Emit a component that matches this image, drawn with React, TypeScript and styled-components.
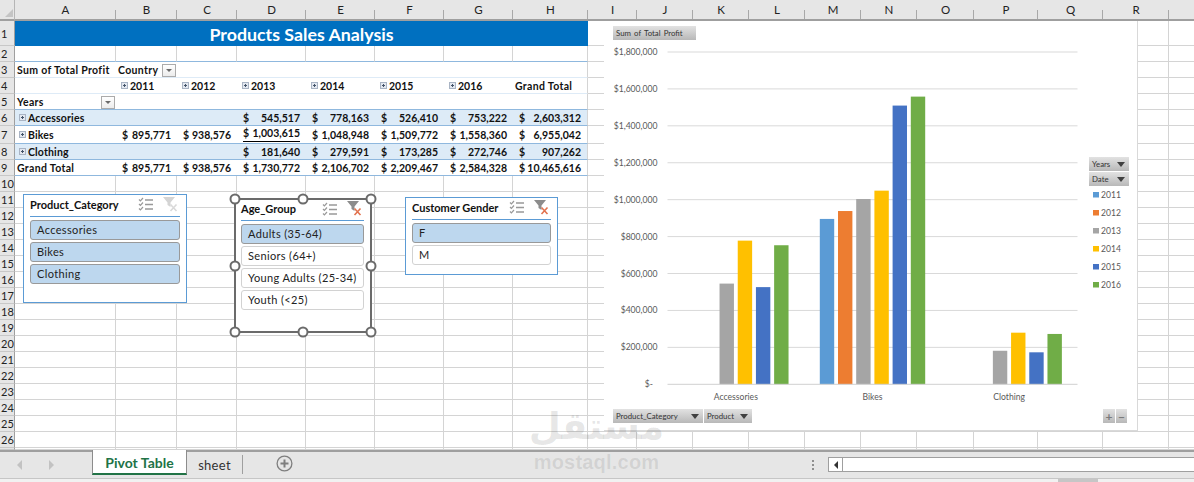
import React from "react";
import styled, { createGlobalStyle } from "styled-components";

const COLUMNS = "A B C D E F G H I J K L M N O P Q R S".split(" ");
const COLUMN_WIDTHS = [101, 61, 60, 69, 69, 69, 69, 75, 49, 56, 56, 56, 56, 56, 57, 64, 65, 66, 65];
const ROW_HEIGHTS = [25, 16, 16, 16, 16, 16, 18, 16, 16, ...Array(17).fill(16), 2];

type Tone = "none" | "band";
type Rule = "none" | "light" | "strong";

interface PivotCellData {
  text?: string;
  money?: [string, string];
  expand?: boolean;
  filter?: boolean;
  indent?: boolean;
  underlined?: boolean;
}

interface PivotRow {
  row: number;
  tone: Tone;
  rule: Rule;
  cells: PivotCellData[];
}

const m = (value: string): PivotCellData => ({ money: ["$", value] });
const blank: PivotCellData = {};

const PIVOT_ROWS: PivotRow[] = [
  {
    row: 3,
    tone: "none",
    rule: "light",
    cells: [{ text: "Sum of Total Profit" }, { text: "Country", filter: true }, blank, blank, blank, blank, blank, blank],
  },
  {
    row: 4,
    tone: "none",
    rule: "light",
    cells: [
      blank,
      { text: "2011", expand: true },
      { text: "2012", expand: true },
      { text: "2013", expand: true },
      { text: "2014", expand: true },
      { text: "2015", expand: true },
      { text: "2016", expand: true },
      { text: "Grand Total" },
    ],
  },
  {
    row: 5,
    tone: "none",
    rule: "strong",
    cells: [{ text: "Years", filter: true }, blank, blank, blank, blank, blank, blank, blank],
  },
  {
    row: 6,
    tone: "band",
    rule: "strong",
    cells: [
      { text: "Accessories", expand: true, indent: true },
      blank,
      blank,
      m("545,517"),
      m("778,163"),
      m("526,410"),
      m("753,222"),
      m("2,603,312"),
    ],
  },
  {
    row: 7,
    tone: "none",
    rule: "strong",
    cells: [
      { text: "Bikes", expand: true, indent: true },
      m("895,771"),
      m("938,576"),
      { money: ["$", "1,003,615"], underlined: true },
      m("1,048,948"),
      m("1,509,772"),
      m("1,558,360"),
      m("6,955,042"),
    ],
  },
  {
    row: 8,
    tone: "band",
    rule: "strong",
    cells: [
      { text: "Clothing", expand: true, indent: true },
      blank,
      blank,
      m("181,640"),
      m("279,591"),
      m("173,285"),
      m("272,746"),
      m("907,262"),
    ],
  },
  {
    row: 9,
    tone: "none",
    rule: "strong",
    cells: [
      { text: "Grand Total" },
      m("895,771"),
      m("938,576"),
      m("1,730,772"),
      m("2,106,702"),
      m("2,209,467"),
      m("2,584,328"),
      m("10,465,616"),
    ],
  },
];

const SERIES = [
  { year: "2011", color: "#5B9BD5" },
  { year: "2012", color: "#ED7D31" },
  { year: "2013", color: "#A5A5A5" },
  { year: "2014", color: "#FFC000" },
  { year: "2015", color: "#4472C4" },
  { year: "2016", color: "#70AD47" },
];

const CATEGORIES = [
  { name: "Accessories", values: [0, 0, 545517, 778163, 526410, 753222] },
  { name: "Bikes", values: [895771, 938576, 1003615, 1048948, 1509772, 1558360] },
  { name: "Clothing", values: [0, 0, 181640, 279591, 173285, 272746] },
];

const AXIS_TICKS = ["$1,800,000", "$1,600,000", "$1,400,000", "$1,200,000", "$1,000,000", "$800,000", "$600,000", "$400,000", "$200,000"];

const GlobalStyle = createGlobalStyle`
  html, body {
    margin: 0;
    padding: 0;
    background: #fff;
  }
  body {
    font-family: "Lato", "Liberation Sans", sans-serif;
  }
`;

const Page = styled.div`
  position: relative;
  width: 1194px;
  height: 482px;
  overflow: hidden;
  display: flex;
  flex-direction: column;
  background: #fff;
`;

const Sheet = styled.div`
  position: relative;
  height: 450px;
  flex: none;
  overflow: hidden;
`;

const Grid = styled.div`
  display: grid;
  grid-template-columns: 15px ${COLUMN_WIDTHS.map((w) => `${w}px`).join(" ")};
  grid-template-rows: 21px ${ROW_HEIGHTS.map((h) => `${h}px`).join(" ")};
`;

const Corner = styled.div`
  position: relative;
  background: #e6e6e6;
  border-right: 1px solid #b5b5b5;
  border-bottom: 2px solid #9f9f9f;
  box-sizing: border-box;

  &::after {
    content: "";
    position: absolute;
    right: 1px;
    bottom: 2px;
    border-left: 8px solid transparent;
    border-bottom: 8px solid #c4c4c4;
  }
`;

const ColumnHead = styled.div`
  position: relative;
  box-sizing: border-box;
  background: #e6e6e6;
  border-bottom: 2px solid #9f9f9f;
  display: flex;
  align-items: center;
  justify-content: center;
  font-size: 11.5px;
  color: #222;

  &::after {
    content: "";
    position: absolute;
    right: 0;
    bottom: 0;
    height: 9px;
    width: 1px;
    background: #a8a8a8;
  }
`;

const RowHead = styled.div`
  box-sizing: border-box;
  background: #e6e6e6;
  border-right: 1px solid #9f9f9f;
  border-bottom: 1px solid #c8c8c8;
  overflow: hidden;
  display: flex;
  align-items: center;
  padding-left: 1px;
  font-size: 11px;
  line-height: 1;
  color: #222;
`;

const BlankCell = styled.div<{ $rule?: string }>`
  box-sizing: border-box;
  border-right: 1px solid #d4d4d4;
  border-bottom: 1px solid ${(p) => p.$rule ?? "#d4d4d4"};
`;

const TitleCell = styled.div`
  grid-column: span 8;
  background: #0070c0;
  color: #fff;
  display: flex;
  align-items: center;
  justify-content: center;
  font-size: 17.8px;
  font-weight: 700;
`;

const RULES: Record<Rule, string> = { none: "transparent", light: "#deebf7", strong: "#8fb8de" };

const PivotCell = styled.div<{ $tone: Tone; $rule: Rule; $edge: boolean; $indent: boolean; $spacing: number }>`
  position: relative;
  box-sizing: border-box;
  display: flex;
  align-items: center;
  gap: 2px;
  padding: 0 6px 0 ${(p) => (p.$indent ? 4 : 2)}px;
  background: ${(p) => (p.$tone === "band" ? "#ddebf7" : "#fff")};
  border-bottom: 1px solid ${(p) => RULES[p.$rule]};
  border-right: ${(p) => (p.$edge ? "1px solid #d4d4d4" : "none")};
  font-size: 10.5px;
  font-weight: 700;
  letter-spacing: ${(p) => p.$spacing}px;
  color: #111;
  white-space: nowrap;
`;

const MoneyValue = styled.div<{ $underlined: boolean }>`
  flex: 1;
  display: flex;
  justify-content: space-between;
  margin-left: 4px;
  ${(p) =>
    p.$underlined
      ? `border-bottom: 1px solid #000; padding-bottom: 2px; margin-bottom: 1px;`
      : ""}
`;

const ExpandBox = styled.span`
  position: relative;
  flex: none;
  width: 7px;
  height: 7px;
  box-sizing: border-box;
  background: #e3e8f0;
  border: 1px solid #a9b4c4;

  &::before,
  &::after {
    content: "";
    position: absolute;
    background: #44546a;
  }
  &::before {
    left: 1px;
    top: 2px;
    width: 3px;
    height: 1px;
  }
  &::after {
    left: 2px;
    top: 1px;
    width: 1px;
    height: 3px;
  }
`;

const YearIndent = styled.span`
  width: 1px;
  flex: none;
`;

const FilterButton = styled.span`
  position: absolute;
  top: 2px;
  right: 1px;
  width: 14px;
  height: 13px;
  box-sizing: border-box;
  background: linear-gradient(#fff, #ececec);
  border: 1px solid #ababab;

  &::after {
    content: "";
    position: absolute;
    left: 3px;
    top: 4px;
    border-left: 3px solid transparent;
    border-right: 3px solid transparent;
    border-top: 3px solid #6a6a6a;
  }
`;

const SlicerBox = styled.div<{ $left: number; $top: number; $width: number; $height: number; $selected?: boolean }>`
  position: absolute;
  left: ${(p) => p.$left}px;
  top: ${(p) => p.$top}px;
  width: ${(p) => p.$width}px;
  height: ${(p) => p.$height}px;
  box-sizing: border-box;
  background: #fff;
  border: ${(p) => (p.$selected ? "2px solid #6b6b6b" : "1px solid #5b9bd5")};
  padding: 0 6px 0 ${(p) => (p.$selected ? 5 : 6)}px;
  display: flex;
  flex-direction: column;
`;

const SlicerHeader = styled.div<{ $selected?: boolean }>`
  height: ${(p) => (p.$selected ? 21 : 22)}px;
  flex: none;
  box-sizing: border-box;
  padding-bottom: 3px;
  display: flex;
  align-items: center;
  justify-content: space-between;
  border-bottom: 1px solid #5b9bd5;
  margin-bottom: 3px;
  font-size: 11px;
  font-weight: 700;
  color: #111;
`;

const SlicerTools = styled.div`
  display: flex;
  align-items: center;
  gap: 10px;
  margin-right: 2px;
`;

const SlicerItems = styled.div`
  display: flex;
  flex-direction: column;
  gap: 2.5px;
`;

const SlicerItem = styled.div<{ $on: boolean }>`
  height: 19.5px;
  box-sizing: border-box;
  display: flex;
  align-items: center;
  padding-left: 6px;
  border-radius: 3px;
  border: 1px solid ${(p) => (p.$on ? "#999" : "#d2d2d2")};
  background: ${(p) => (p.$on ? "#bdd7ee" : "#fff")};
  font-size: 11px;
  letter-spacing: 0.35px;
  color: #222;
  white-space: nowrap;
`;

const Handle = styled.span<{ $h: number; $v: number }>`
  position: absolute;
  left: calc(${(p) => p.$h}% + ${(p) => (p.$h - 50) / 50}px);
  top: calc(${(p) => p.$v}% + ${(p) => (p.$v - 50) / 50}px);
  width: 11px;
  height: 11px;
  box-sizing: border-box;
  border-radius: 50%;
  background: #fff;
  border: 2px solid #6b6b6b;
  transform: translate(-50%, -50%);
`;

const ChartFrame = styled.div`
  position: absolute;
  left: 604px;
  top: 21px;
  width: 534px;
  height: 410px;
  box-sizing: border-box;
  background: #fff;
  border-right: 1px solid #d9d9d9;
  border-bottom: 1px solid #d9d9d9;
`;

const ChartSvg = styled.svg`
  display: block;
  font-family: "Lato", "Liberation Sans", sans-serif;
`;

const FieldButton = styled.div<{ $x: number; $y: number; $w: number }>`
  position: absolute;
  left: ${(p) => p.$x - 604}px;
  top: ${(p) => p.$y - 21}px;
  width: ${(p) => p.$w}px;
  height: 14px;
  box-sizing: border-box;
  padding: 0 4px 0 3px;
  display: flex;
  align-items: center;
  justify-content: space-between;
  background: linear-gradient(#e2e2e2, #b8b8b8);
  font-size: 7.8px;
  word-spacing: 1.2px;
  color: #333;
  white-space: nowrap;
`;

const FieldArrow = styled.span`
  flex: none;
  border-left: 4px solid transparent;
  border-right: 4px solid transparent;
  border-top: 5px solid #404040;
`;

const ZoomButton = styled(FieldButton)`
  justify-content: center;
  padding: 0;
  font-size: 12px;
  font-weight: 700;
  color: #7a7a7a;
`;

const TabBar = styled.div`
  height: 28px;
  flex: none;
  box-sizing: border-box;
  background: #e6e6e6;
  border-top: 2px solid #9f9f9f;
  display: flex;
  align-items: stretch;
`;

const NavArrows = styled.div`
  width: 92px;
  box-sizing: border-box;
  padding: 0 38px 0 17px;
  display: flex;
  align-items: center;
  justify-content: space-between;
`;

const NavArrow = styled.span<{ $dir: "left" | "right" }>`
  border-top: 5px solid transparent;
  border-bottom: 5px solid transparent;
  ${(p) => (p.$dir === "left" ? "border-right" : "border-left")}: 5px solid #c2c2c2;
`;

const ActiveTab = styled.div`
  width: 95px;
  height: 25px;
  margin-top: -2px;
  padding-top: 1px;
  box-sizing: border-box;
  background: #fff;
  border-left: 1px solid #8c8c8c;
  border-right: 1px solid #8c8c8c;
  border-bottom: 2px solid #217346;
  display: flex;
  align-items: center;
  justify-content: center;
  font-size: 14px;
  font-weight: 700;
  color: #217346;
`;

const SheetTab = styled.div`
  width: 56px;
  height: 19px;
  margin-top: 3px;
  box-sizing: border-box;
  border-right: 1px solid #9f9f9f;
  display: flex;
  align-items: center;
  justify-content: center;
  font-size: 13px;
  letter-spacing: 0.3px;
  color: #333;
`;

const AddSheet = styled.div`
  margin-left: 33px;
  display: flex;
  align-items: center;
  padding-bottom: 3px;
`;

const ScrollArea = styled.div`
  margin-left: auto;
  width: 382px;
  display: flex;
  align-items: flex-start;
`;

const GripDots = styled.div`
  width: 2px;
  height: 10px;
  margin: 8px 14px 0 0;
  background: repeating-linear-gradient(#8f8f8f 0 2px, transparent 2px 4px);
`;

const ScrollTrack = styled.div`
  flex: 1;
  height: 15px;
  margin-top: 5px;
  box-sizing: border-box;
  background: #fff;
  border-top: 1px solid #9f9f9f;
  border-bottom: 1px solid #9f9f9f;
  border-left: 1px solid #9f9f9f;
  display: flex;
`;

const ScrollStep = styled.div`
  width: 14px;
  box-sizing: border-box;
  border-right: 1px solid #9f9f9f;
  display: flex;
  align-items: center;
  justify-content: center;

  &::before {
    content: "";
    border-top: 4px solid transparent;
    border-bottom: 4px solid transparent;
    border-right: 4px solid #333;
  }
`;

const StatusStrip = styled.div`
  flex: 1;
  box-sizing: border-box;
  background: #f1f1f1;
  border-top: 1px solid #c6c6c6;
`;

const StatusThumb = styled.div`
  width: 40px;
  height: 100%;
  margin-left: 1058px;
  background: #c6c6c6;
`;

const Watermark = styled.div`
  position: absolute;
  left: 534px;
  top: 402px;
  width: 125px;
  display: flex;
  flex-direction: column;
  align-items: center;
  color: rgba(70, 70, 70, 0.13);
  pointer-events: none;
`;

const WatermarkArabic = styled.div`
  font-family: "DejaVu Sans", sans-serif;
  font-weight: 700;
  font-size: 37px;
  line-height: 50px;
`;

const WatermarkLatin = styled.div`
  font-family: "Liberation Sans", sans-serif;
  font-weight: 700;
  font-size: 20px;
  line-height: 20px;
  letter-spacing: 0.2px;
`;

const ChecklistIcon = () => (
  <svg width="15" height="14" viewBox="0 0 15 14" fill="none" stroke="#999">
    <path d="M1 2.5l1.4 1.4L5 1M1 7l1.4 1.4L5 5.5M1 11.5l1.4 1.4L5 10" strokeWidth="1.2" />
    <path d="M7 3h8M7 7.5h8M7 12h8" strokeWidth="1.3" />
  </svg>
);

const ClearFilterIcon = ({ active }: { active: boolean }) => (
  <svg width="15" height="15" viewBox="0 0 15 15" fill="none">
    <path d="M0 0h12L7.5 5.5V10L4.5 8V5.5z" fill={active ? "#8c8c8c" : "#d4d4d4"} />
    <path d="M7.5 7.5l6 6.5M13.5 7.5l-6 6.5" stroke={active ? "#e2734f" : "#d9d9d9"} strokeWidth="1.6" />
  </svg>
);

const PlusCircleIcon = () => (
  <svg width="17" height="17" viewBox="0 0 17 17" fill="none">
    <circle cx="8.5" cy="8.5" r="7.4" stroke="#7f7f7f" strokeWidth="1.3" />
    <path d="M8.5 4.5v8M4.5 8.5h8" stroke="#7f7f7f" strokeWidth="2" />
  </svg>
);

const Slicer = ({
  title,
  items,
  selected,
  cleared,
  left,
  top,
  width,
  height,
  handles,
}: {
  title: string;
  items: string[];
  selected: string[];
  cleared: boolean;
  left: number;
  top: number;
  width: number;
  height: number;
  handles?: boolean;
}) => (
  <SlicerBox $left={left} $top={top} $width={width} $height={height} $selected={handles}>
    <SlicerHeader $selected={handles}>
      {title}
      <SlicerTools>
        <ChecklistIcon />
        <ClearFilterIcon active={cleared} />
      </SlicerTools>
    </SlicerHeader>
    <SlicerItems>
      {items.map((item) => (
        <SlicerItem key={item} $on={selected.includes(item)}>
          {item}
        </SlicerItem>
      ))}
    </SlicerItems>
    {handles &&
      [
        [0, 0],
        [50, 0],
        [100, 0],
        [0, 50],
        [100, 50],
        [0, 100],
        [50, 100],
        [100, 100],
      ].map(([h, v]) => <Handle key={`${h}-${v}`} $h={h} $v={v} />)}
  </SlicerBox>
);

const AXIS_ZERO = 384.3;
const PX_PER_DOLLAR = 332.3 / 1800000;
const PLOT_LEFT = 667.5;
const PLOT_RIGHT = 1077.5;
const BAR_WIDTH = 14.4;
const BAR_STEP = 18.2;

const SalesChart = () => {
  const categoryWidth = (PLOT_RIGHT - PLOT_LEFT) / CATEGORIES.length;
  return (
    <ChartFrame>
      <ChartSvg width="533" height="409" viewBox="604 21 533 409">
        {AXIS_TICKS.map((label, i) => {
          const y = 52 + i * 36.92;
          return (
            <g key={label}>
              <line x1={PLOT_LEFT} x2={PLOT_RIGHT} y1={y} y2={y} stroke="#d9d9d9" />
              <text x="657.5" y={y + 3} textAnchor="end" fontSize="8.6" fill="#595959">
                {label}
              </text>
            </g>
          );
        })}
        <text x="653" y={AXIS_ZERO + 3} textAnchor="end" fontSize="8.6" fill="#595959">
          $-
        </text>
        {CATEGORIES.map((category, c) => {
          const center = PLOT_LEFT + categoryWidth * (c + 0.5);
          const start = center - (BAR_STEP * 6 - (BAR_STEP - BAR_WIDTH)) / 2;
          return (
            <g key={category.name}>
              {category.values.map((value, s) =>
                value > 0 ? (
                  <rect
                    key={SERIES[s].year}
                    x={start + s * BAR_STEP}
                    y={AXIS_ZERO - value * PX_PER_DOLLAR}
                    width={BAR_WIDTH}
                    height={value * PX_PER_DOLLAR}
                    fill={SERIES[s].color}
                  />
                ) : null
              )}
              <text x={center} y="400" textAnchor="middle" fontSize="8.6" fill="#595959">
                {category.name}
              </text>
            </g>
          );
        })}
        <line x1={PLOT_LEFT} x2={PLOT_RIGHT} y1={AXIS_ZERO} y2={AXIS_ZERO} stroke="#d0d0d0" />
        {SERIES.map((series, i) => (
          <g key={series.year}>
            <rect x="1093" y={192 + i * 18} width="6" height="5.5" fill={series.color} />
            <text x="1101" y={198 + i * 18} fontSize="8.6" fill="#595959">
              {series.year}
            </text>
          </g>
        ))}
      </ChartSvg>
      <FieldButton $x={613} $y={26} $w={83}>
        Sum of Total Profit
      </FieldButton>
      <FieldButton $x={1089} $y={157} $w={40}>
        Years
        <FieldArrow />
      </FieldButton>
      <FieldButton $x={1089} $y={172} $w={40}>
        Date
        <FieldArrow />
      </FieldButton>
      <FieldButton $x={613} $y={409} $w={90}>
        Product_Category
        <FieldArrow />
      </FieldButton>
      <FieldButton $x={704} $y={409} $w={48}>
        Product
        <FieldArrow />
      </FieldButton>
      <ZoomButton $x={1103} $y={409} $w={12}>
        +
      </ZoomButton>
      <ZoomButton $x={1116} $y={409} $w={11}>
        −
      </ZoomButton>
    </ChartFrame>
  );
};

const labelSpacing = (cell: PivotCellData) => {
  if (!cell.text) return 0;
  if (cell.indent) return 0.15;
  return cell.expand ? 0 : 0.33;
};

const renderPivotCell = (row: PivotRow, cell: PivotCellData, i: number) => (
  <PivotCell
    key={`${row.row}-${i}`}
    $tone={row.tone}
    $rule={row.rule}
    $edge={i === 7}
    $indent={Boolean(cell.indent)}
    $spacing={labelSpacing(cell)}
  >
    {cell.expand && !cell.indent && <YearIndent />}
    {cell.expand && <ExpandBox />}
    {cell.text}
    {cell.money && (
      <MoneyValue $underlined={Boolean(cell.underlined)}>
        <span>{cell.money[0]}</span>
        <span>{cell.money[1]}</span>
      </MoneyValue>
    )}
    {cell.filter && <FilterButton />}
  </PivotCell>
);

const App = () => (
  <Page>
    <GlobalStyle />
    <Sheet>
      <Grid>
        <Corner />
        {COLUMNS.map((c) => (
          <ColumnHead key={c}>{c === "S" ? "" : c}</ColumnHead>
        ))}
        {ROW_HEIGHTS.map((_, r) => {
          const row = r + 1;
          const pivot = PIVOT_ROWS.find((p) => p.row === row);
          return (
            <React.Fragment key={row}>
              <RowHead>{row < 27 ? row : null}</RowHead>
              {row === 1 && <TitleCell>Products Sales Analysis</TitleCell>}
              {pivot && pivot.cells.map((cell, i) => renderPivotCell(pivot, cell, i))}
              {COLUMNS.slice(row === 1 || pivot ? 8 : 0).map((c, i) => (
                <BlankCell key={c} $rule={row === 2 && i < 8 ? "#8fb8de" : undefined} />
              ))}
            </React.Fragment>
          );
        })}
      </Grid>
      <Slicer
        title="Product_Category"
        items={["Accessories", "Bikes", "Clothing"]}
        selected={["Accessories", "Bikes", "Clothing"]}
        cleared={false}
        left={23}
        top={194}
        width={164}
        height={109}
      />
      <Slicer
        title="Age_Group"
        items={["Adults (35-64)", "Seniors (64+)", "Young Adults (25-34)", "Youth (<25)"]}
        selected={["Adults (35-64)"]}
        cleared
        left={234}
        top={198}
        width={138}
        height={135}
        handles
      />
      <Slicer
        title="Customer Gender"
        items={["F", "M"]}
        selected={["F"]}
        cleared
        left={405}
        top={197}
        width={153}
        height={78}
      />
      <SalesChart />
    </Sheet>
    <TabBar>
      <NavArrows>
        <NavArrow $dir="left" />
        <NavArrow $dir="right" />
      </NavArrows>
      <ActiveTab>Pivot Table</ActiveTab>
      <SheetTab>sheet</SheetTab>
      <AddSheet>
        <PlusCircleIcon />
      </AddSheet>
      <ScrollArea>
        <GripDots />
        <ScrollTrack>
          <ScrollStep />
        </ScrollTrack>
      </ScrollArea>
    </TabBar>
    <StatusStrip>
      <StatusThumb />
    </StatusStrip>
    <Watermark>
      <WatermarkArabic>مستقل</WatermarkArabic>
      <WatermarkLatin>mostaql.com</WatermarkLatin>
    </Watermark>
  </Page>
);

export default App;
